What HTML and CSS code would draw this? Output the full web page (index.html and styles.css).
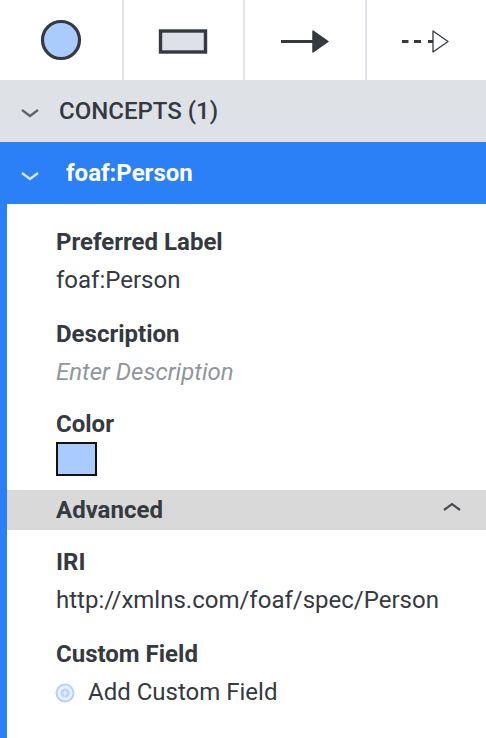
FILE: index.html
```html
<!DOCTYPE html>
<html>
<head>
<meta charset="utf-8">
<link rel="stylesheet" href="styles.css">
</head>
<body>
<div class="toolbar">
  <div class="tool">
    <svg width="48" height="48" viewBox="0 0 48 48"><circle cx="24" cy="24" r="18.5" fill="#a9cbfe" stroke="#343a40" stroke-width="3.2"/></svg>
  </div>
  <div class="tool">
    <svg width="52" height="28" viewBox="0 0 52 28"><rect x="3.5" y="5" width="45" height="21" fill="#dee2e6" stroke="#343a40" stroke-width="3.4"/></svg>
  </div>
  <div class="tool">
    <svg width="52" height="28" viewBox="0 0 52 28"><line x1="2" y1="15.5" x2="36" y2="15.5" stroke="#343a40" stroke-width="3"/><path d="M34 5 L49 15.5 L34 26 Z" fill="#343a40" stroke="#343a40" stroke-width="1.5" stroke-linejoin="round"/></svg>
  </div>
  <div class="tool">
    <svg width="52" height="28" viewBox="0 0 52 28"><path d="M2 15.5 H8.5 M14 15.5 H21 M28 15.5 H33" stroke="#343a40" stroke-width="3"/><path d="M33 5 L48 15.5 L33 26 Z" fill="none" stroke="#343a40" stroke-width="1.3" stroke-linejoin="round"/></svg>
  </div>
</div>

<div class="section-head">
  <svg class="chev" width="20" height="10" viewBox="0 0 20 10"><path d="M2 2 L10 8 L18 2" fill="none" stroke="#5f6368" stroke-width="2.2"/></svg>
  <span>CONCEPTS (1)</span>
</div>

<div class="item-head">
  <svg class="chev" width="20" height="10" viewBox="0 0 20 10"><path d="M2 2 L10 8 L18 2" fill="none" stroke="#dce9ff" stroke-width="2.2"/></svg>
  <span>foaf:Person</span>
</div>

<div class="item-body">
  <div class="pad">
    <div class="field">
      <div class="label">Preferred Label</div>
      <div class="value">foaf:Person</div>
    </div>
    <div class="field">
      <div class="label">Description</div>
      <div class="value placeholder">Enter Description</div>
    </div>
    <div class="field color-field">
      <div class="label short">Color</div>
      <div class="swatch"></div>
    </div>
  </div>
  <div class="adv-head">
    <span>Advanced</span>
    <svg width="20" height="10" viewBox="0 0 20 10"><path d="M2 8 L10 2 L18 8" fill="none" stroke="#4a4f55" stroke-width="2.2"/></svg>
  </div>
  <div class="pad adv">
    <div class="field">
      <div class="label">IRI</div>
      <div class="value">http://xmlns.com/foaf/spec/Person</div>
    </div>
    <div class="field">
      <div class="label">Custom Field</div>
      <div class="value add">
        <svg width="20" height="20" viewBox="0 0 20 20"><circle cx="10" cy="10" r="8.5" fill="#e8f1ff" stroke="#b4d2ff" stroke-width="2"/><circle cx="10" cy="10" r="4.5" fill="#b9d5ff"/><path d="M10 7.5 V12.5 M7.5 10 H12.5" stroke="#eef5ff" stroke-width="1.2"/></svg>
        <span>Add Custom Field</span>
      </div>
    </div>
  </div>
</div>
</body>
</html>
```

FILE: styles.css
```css
* { box-sizing: border-box; }
html, body { margin: 0; padding: 0; background: #ffffff; }
body {
  font-family: Roboto, "Liberation Sans", sans-serif;
  color: #343a40;
  width: 486px;
  height: 738px;
  overflow: hidden;
}

.toolbar {
  display: grid;
  grid-template-columns: repeat(4, 1fr);
  height: 80px;
}
.tool {
  display: flex;
  align-items: center;
  justify-content: center;
  border-left: 2px solid #e1e5e9;
}
.tool:first-child { border-left: none; }

.section-head {
  height: 62px;
  background: #dee2e6;
  display: flex;
  align-items: center;
  padding-left: 20px;
  font-size: 24px;
  font-weight: 500;
  color: #343a40;
}
.section-head .chev { margin-right: 19px; margin-top: 3px; }

.item-head {
  height: 62px;
  background: #2b7ff7;
  display: flex;
  align-items: center;
  padding-left: 20px;
  font-size: 24px;
  font-weight: 700;
  color: #ffffff;
}
.item-head .chev { margin-right: 26px; margin-top: 6px; }

.item-body {
  border-left: 7px solid #2b7ff7;
  height: 534px;
}
.pad { padding: 19px 0 0 49px; }
.pad.adv { padding-top: 13px; }

.field { margin-bottom: 15px; }
.label {
  font-size: 24px;
  font-weight: 700;
  line-height: 38px;
}
.label.short { line-height: 35px; }
.value {
  font-size: 24px;
  line-height: 39px;
}
.placeholder { font-style: italic; color: #8f969d; }

.color-field { margin-bottom: 14px; }
.swatch {
  width: 41px;
  height: 34px;
  background: #a9cbfe;
  border: 2px solid #111111;
}

.adv-head {
  height: 40px;
  background: #d9d9d9;
  display: flex;
  align-items: center;
  justify-content: space-between;
  padding: 0 24px 0 49px;
  font-size: 24px;
  font-weight: 700;
}
.adv-head svg { margin-top: -6px; }

.add { display: flex; align-items: center; }
.add svg { margin-left: -1px; margin-right: 13px; }
```
